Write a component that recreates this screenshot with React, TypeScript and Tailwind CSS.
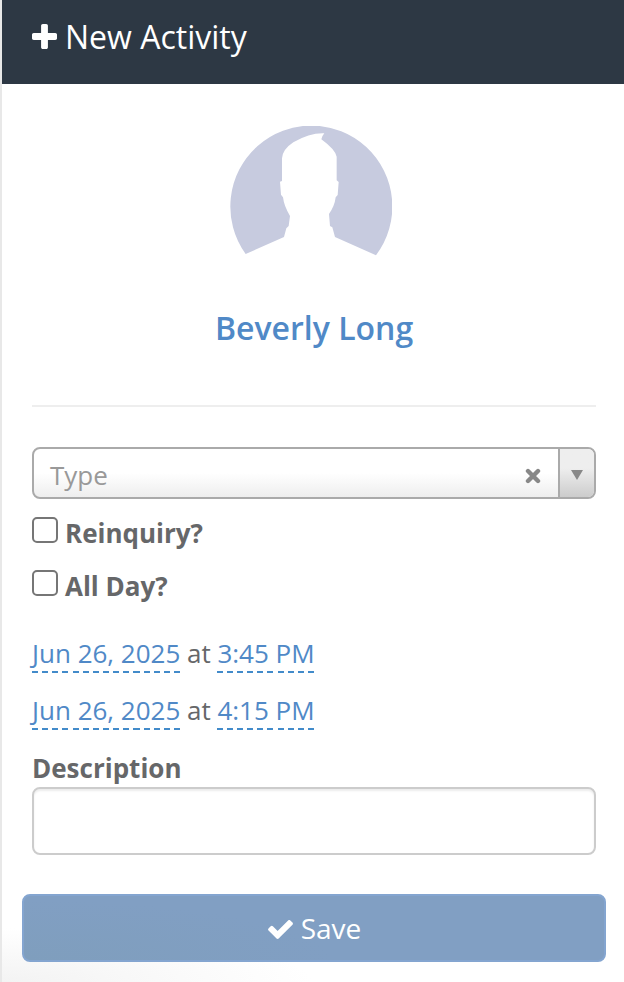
import type { ReactNode } from "react";

function PlusIcon() {
  return (
    <svg viewBox="192 128 1408 1408" className="mb-px mr-2 h-[25px] w-[25px] fill-current">
      <path d="M1600 736v192q0 40-28 68t-68 28h-416v416q0 40-28 68t-68 28h-192q-40 0-68-28t-28-68v-416h-416q-40 0-68-28t-28-68v-192q0-40 28-68t68-28h416v-416q0-40 28-68t68-28h192q40 0 68 28t28 68v416h416q40 0 68 28t28 68z" />
    </svg>
  );
}

function CheckIcon() {
  return (
    <svg viewBox="121 338 1550 1184" className="mr-2 mt-[2px] h-[19px] w-[25px] fill-current">
      <path d="M1671 566q0 40-28 68l-724 724-136 136q-28 28-68 28t-68-28l-136-136-362-362q-28-28-28-68t28-68l136-136q28-28 68-28t68 28l294 295 656-657q28-28 68-28t68 28l136 136q28 28 28 68z" />
    </svg>
  );
}

function Avatar() {
  return (
    <svg viewBox="30 48 486 390" className="h-[130px] w-[162px]">
      <path
        fill="#c7cbdf"
        d="M77 432A243 243 0 1 1 468 436L345 381L337 352L330 348L327 312Q344 288 347 262L353 255L356 216L350 211V140Q345 118 304 88Q306 78 313 70Q270 68 220 97Q188 118 186 145V213L180 215L183 254L189 262Q192 288 210 318L206 348L199 355L192 381Z"
      />
    </svg>
  );
}

function Checkbox({ label }: { label: string }) {
  return (
    <label className="flex h-[53px] items-start">
      <input
        type="checkbox"
        className="h-[26px] w-[26px] appearance-none rounded-[5px] border-2 border-[#767676] bg-white"
      />
      <span className="ml-[7px] mt-[-2px] font-bold leading-[36px]">{label}</span>
    </label>
  );
}

function Editable({ children }: { children: ReactNode }) {
  return (
    <a
      href="#"
      className="block h-[38px] bg-[repeating-linear-gradient(90deg,#428bca_0_6px,transparent_6px_10.15px)] bg-[length:100%_2px] bg-bottom bg-no-repeat leading-[36px] text-[#5089c7]"
    >
      {children}
    </a>
  );
}

function DateRow({ date, time }: { date: string; time: string }) {
  return (
    <div className="flex h-[57px] gap-[6.7px] leading-[36px]">
      <Editable>{date}</Editable>
      <span>at</span>
      <Editable>{time}</Editable>
    </div>
  );
}

export default function App() {
  return (
    <div className="h-[982px] overflow-hidden border-l-2 border-[#e8e8e8] bg-white bg-[radial-gradient(ellipse_310px_54px_at_0%_100%,#f3f3f3,#ffffff)] font-['Open_Sans',sans-serif] text-[26px] text-[#666769]">
      {/* Header */}
      <header className="flex h-[84px] items-center bg-[#2d3844] pb-[10px] pl-[30px] text-[32px] text-white">
        <PlusIcon />
        <h1>New Activity</h1>
      </header>

      {/* Contact */}
      <div className="ml-[30px] mr-[28px] flex h-[323px] flex-col items-center border-b-2 border-[#eeeeee] pt-[42px]">
        <div className="mr-[6px]">
          <Avatar />
        </div>
        <a href="#" className="mt-[50px] text-[32px] font-semibold leading-[44px] text-[#5089c7]">
          Beverly Long
        </a>
      </div>

      {/* Form */}
      <div className="ml-[30px] mr-[28px] pt-10">
        <div className="flex h-[52px] overflow-hidden rounded-lg border-2 border-[#aaaaaa] bg-linear-to-b from-white from-50% to-[#eeeeee]">
          <span className="flex-1 pl-4 pt-px leading-[50px] text-[#999999]">Type</span>
          <svg viewBox="0 0 16 16" className="mr-[17px] mt-[19px] h-4 w-4">
            <path d="M3 3L13 13M13 3L3 13" stroke="#888888" strokeWidth="4.4" strokeLinecap="round" />
          </svg>
          <div className="flex w-9 justify-center border-l-2 border-[#aaaaaa] bg-linear-to-b from-[#eeeeee] from-40% to-[#cccccc]">
            <svg viewBox="0 0 12 10" className="mt-[21px] h-[10px] w-3">
              <path d="M0 0H12L6 10Z" fill="#888888" />
            </svg>
          </div>
        </div>

        <div className="mt-[18px]">
          <Checkbox label="Reinquiry?" />
          <Checkbox label="All Day?" />
        </div>

        <div className="mt-[12px]">
          <DateRow date="Jun 26, 2025" time="3:45 PM" />
          <DateRow date="Jun 26, 2025" time="4:15 PM" />
        </div>

        <label className="block pt-px font-bold leading-[36px]">
          Description
          <input
            type="text"
            className="mt-px block h-[68px] w-full rounded-lg border-2 border-[#cccccc] bg-white px-4 font-normal shadow-[inset_0_2px_2px_rgba(0,0,0,0.075)]"
          />
        </label>
      </div>

      <button
        type="button"
        className="ml-5 mt-[39px] flex h-[68px] w-[584px] items-center justify-center rounded-lg border-2 border-[#84a5d0] bg-[#819fc3] bg-[radial-gradient(ellipse_310px_60px_at_0%_100%,#7f9ebd,#819fc3)] pl-px text-[28px] text-white"
      >
        <CheckIcon />
        Save
      </button>
    </div>
  );
}
